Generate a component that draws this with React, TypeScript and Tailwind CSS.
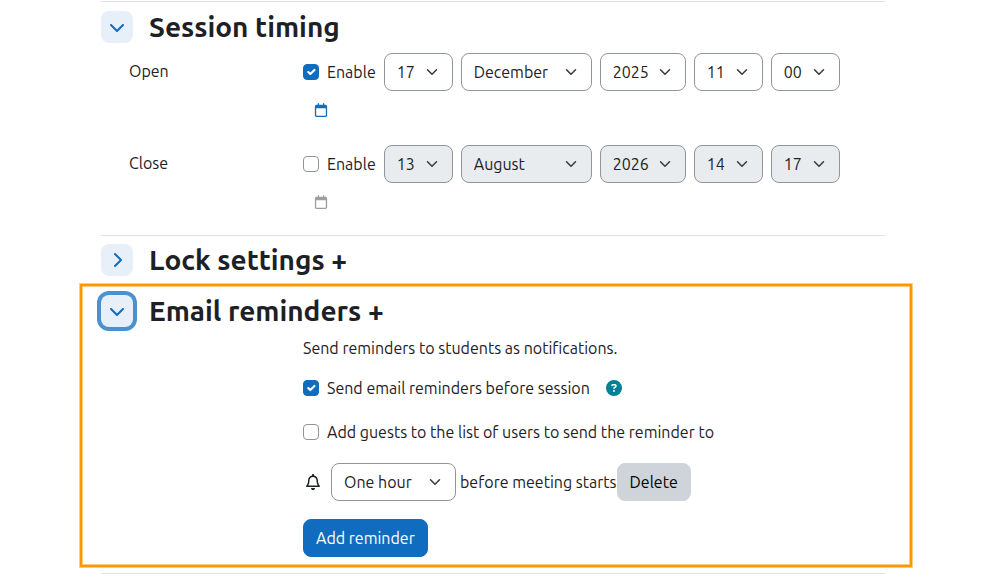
import React, { useState } from "react";
import {
  FaChevronDown,
  FaChevronRight,
  FaCircleQuestion,
  FaRegBell,
  FaRegCalendar,
} from "react-icons/fa6";

const days = Array.from({ length: 31 }, (_, i) => String(i + 1));
const months = [
  "January",
  "February",
  "March",
  "April",
  "May",
  "June",
  "July",
  "August",
  "September",
  "October",
  "November",
  "December",
];
const years = ["2024", "2025", "2026", "2027", "2028"];
const hours = Array.from({ length: 24 }, (_, i) => String(i).padStart(2, "0"));
const minutes = Array.from({ length: 60 }, (_, i) => String(i).padStart(2, "0"));

const App: React.FC = () => {
  return (
    <div className="min-h-screen bg-white pt-px font-['Ubuntu','Noto_Sans',sans-serif] text-base leading-6 text-[#1d2125]">
      <main className="ml-20 mr-[90px]">
        {/* Session timing */}
        <section className="ml-[21px] mr-[27px] border-t border-[#dee2e6] pt-[9px] pb-[26px]">
          <SectionHeader title="Session timing" open />
          <div className="mt-2.5 grid gap-7 pl-7">
            <DateRow
              name="Open"
              enabled
              day="17"
              month="December"
              year="2025"
              hour="11"
              minute="00"
            />
            <DateRow
              name="Close"
              enabled={false}
              day="13"
              month="August"
              year="2026"
              hour="14"
              minute="17"
            />
          </div>
        </section>

        {/* Lock settings */}
        <section className="ml-[21px] mr-[27px] border-t border-[#dee2e6] py-2">
          <SectionHeader title="Lock settings +" open={false} />
        </section>

        {/* Email reminders */}
        <section className="border-2 border-[#ff9800] pt-[9px] pr-[25px] pb-2 pl-[19px] shadow-[0_0_0_1px_#ffcb80,inset_0_0_0_1px_#ffcb80]">
          <SectionHeader title="Email reminders +" open focused />
          <div className="pl-[202px]">
            <p className="mt-[9px]">Send reminders to students as notifications.</p>
            <div className="mt-4 flex items-center gap-4">
              <Checkbox label="Send email reminders before session" defaultChecked />
              <button type="button" aria-label="Help" className="text-[#008196]">
                <FaCircleQuestion className="size-4" />
              </button>
            </div>
            <div className="mt-5 flex">
              <Checkbox label="Add guests to the list of users to send the reminder to" />
            </div>
            <div className="mt-[19px] flex items-center">
              <FaRegBell className="mr-2.5 ml-0.5 size-4" />
              <Select
                label="Reminder time"
                value="One hour"
                options={["One hour", "Two hours", "One day", "Two days", "One week"]}
                width="w-[125px]"
              />
              <span className="ml-1">before meeting starts</span>
              <button
                type="button"
                className="h-[38px] rounded-lg border border-[#ced4da] bg-[#ced4da] px-3 text-black"
              >
                Delete
              </button>
            </div>
            <button
              type="button"
              className="mt-[18px] h-[38px] rounded-lg border border-[#0f6cbf] bg-[#0f6cbf] px-3 text-white"
            >
              Add reminder
            </button>
          </div>
        </section>

        <hr className="mt-1.5 mr-[27px] ml-[21px] border-[#dee2e6]" />
      </main>
    </div>
  );
};

export default App;

// ================= Section header =================
const SectionHeader = ({
  title,
  open,
  focused = false,
}: {
  title: string;
  open: boolean;
  focused?: boolean;
}) => (
  <div className="flex h-8 items-center gap-4">
    <button
      type="button"
      aria-label={title}
      aria-expanded={open}
      className={`flex size-8 shrink-0 items-center justify-center rounded-lg bg-[#e7f0f9] text-[#0f6cbf] ${
        focused ? "ring-4 ring-[#4b91cf]" : ""
      }`}
    >
      {open ? <FaChevronDown className="size-4" /> : <FaChevronRight className="size-4" />}
    </button>
    <h3 className="text-[28px] leading-8 font-semibold">{title}</h3>
  </div>
);

// ================= Date row =================
const DateRow = ({
  name,
  enabled,
  day,
  month,
  year,
  hour,
  minute,
}: {
  name: string;
  enabled: boolean;
  day: string;
  month: string;
  year: string;
  hour: string;
  minute: string;
}) => {
  const [on, setOn] = useState(enabled);

  return (
    <fieldset className="flex">
      <legend className="float-left w-[174px] shrink-0 pt-1.5">{name}</legend>
      <div>
        <div className="flex items-center gap-2">
          <Checkbox label="Enable" defaultChecked={enabled} onChange={setOn} />
          <Select label="Day" value={day} options={days} width="w-[69px]" disabled={!on} />
          <Select label="Month" value={month} options={months} width="w-[131px]" disabled={!on} />
          <Select label="Year" value={year} options={years} width="w-[86px]" disabled={!on} />
          <Select label="Hour" value={hour} options={hours} width="w-[69px]" disabled={!on} />
          <Select label="Minute" value={minute} options={minutes} width="w-[69px]" disabled={!on} />
        </div>
        <button
          type="button"
          aria-label="Calendar"
          disabled={!on}
          className="mt-3 ml-[11px] block text-[#0f6cbf] disabled:text-[#9b9fa3]"
        >
          <FaRegCalendar className="size-3.5" />
        </button>
      </div>
    </fieldset>
  );
};

// ================= Form controls =================
const Checkbox = ({
  label,
  defaultChecked = false,
  onChange,
}: {
  label: string;
  defaultChecked?: boolean;
  onChange?: (checked: boolean) => void;
}) => (
  <label className="flex items-center gap-2">
    <span className="relative block size-4 shrink-0">
      <input
        type="checkbox"
        defaultChecked={defaultChecked}
        onChange={(e) => onChange?.(e.target.checked)}
        className="peer block size-4 appearance-none rounded border border-[#8f959e] bg-white checked:border-[#0f6cbf] checked:bg-[#0f6cbf]"
      />
      <svg
        viewBox="0 0 20 20"
        className="pointer-events-none absolute inset-px hidden size-3.5 peer-checked:block"
        fill="none"
        stroke="#fff"
        strokeWidth="3"
        strokeLinecap="round"
        strokeLinejoin="round"
      >
        <path d="m6 10 3 3 6-6" />
      </svg>
    </span>
    {label}
  </label>
);

const Select = ({
  label,
  value,
  options,
  width,
  disabled = false,
}: {
  label: string;
  value: string;
  options: string[];
  width: string;
  disabled?: boolean;
}) => (
  <span className={`relative block shrink-0 ${width}`}>
    <select
      aria-label={label}
      defaultValue={value}
      disabled={disabled}
      className="block h-[38px] w-full appearance-none rounded-lg border border-[#8f959e] bg-white pr-8 pl-3 opacity-100 disabled:bg-[#e9ecef]"
    >
      {options.map((o) => (
        <option key={o}>{o}</option>
      ))}
    </select>
    <svg
      viewBox="0 0 16 16"
      className="pointer-events-none absolute top-[13px] right-[15px] size-3"
      fill="none"
      stroke="#343a40"
      strokeWidth="2"
      strokeLinecap="round"
      strokeLinejoin="round"
    >
      <path d="m2 5 6 6 6-6" />
    </svg>
  </span>
);
